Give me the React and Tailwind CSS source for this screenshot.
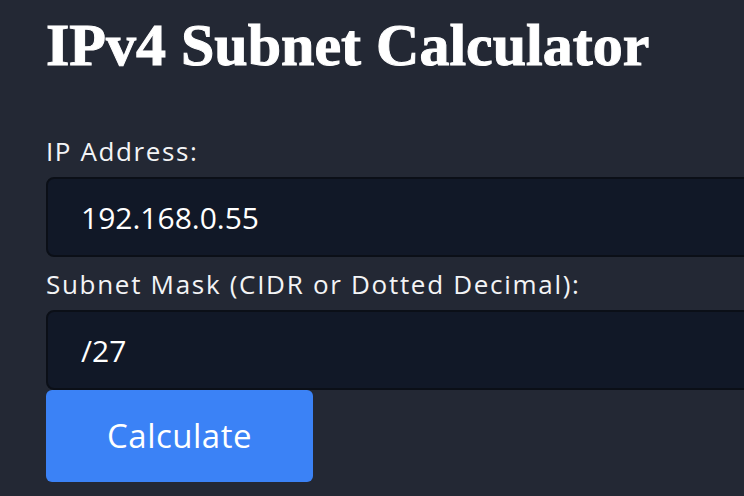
import React, { useState } from 'react';

const labelFont = { fontFamily: '"Open Sans", "Liberation Sans", sans-serif' };

export default function App() {
  const [ip, setIp] = useState('192.168.0.55');
  const [mask, setMask] = useState('/27');

  return (
    <div className="w-[744px] h-[496px] overflow-hidden bg-[#232834]">
      <div className="w-[820px] pl-[46px] pt-[15px]">
        <h1
          className="text-[60px] font-bold text-white leading-[60px] tracking-[0px] [-webkit-text-stroke:1px_white]"
          style={{ fontFamily: '"Liberation Serif", "DejaVu Serif", serif' }}
        >
          IPv4 Subnet Calculator
        </h1>

        <div className="mt-[59px] flex flex-col" style={labelFont}>
          <label className="text-[26px] text-gray-100 leading-[34px] mb-[9px] tracking-[1.6px]">IP Address:</label>
          <input
            value={ip}
            onChange={(e) => setIp(e.target.value)}
            className="h-[80px] w-full rounded-lg border-2 border-[#0b0f17] bg-[#111827] px-[33px] text-[30px] tracking-[0px] text-white outline-none"
          />

          <label className="text-[26px] text-gray-100 leading-[34px] mt-[10px] mb-[9px] tracking-[1.7px]">
            Subnet Mask (CIDR or Dotted Decimal):
          </label>
          <input
            value={mask}
            onChange={(e) => setMask(e.target.value)}
            className="h-[80px] w-full rounded-lg border-2 border-[#0b0f17] bg-[#111827] px-[33px] text-[30px] tracking-[0px] text-white outline-none"
          />

          <button className="w-[267px] h-[92px] rounded-md bg-[#3b82f6] text-[33px] tracking-[0.5px] text-white">
            Calculate
          </button>

          <div className="mt-[6px] text-[26px] text-gray-100 leading-[34px] tracking-[1.6px]">Network Address:</div>
        </div>
      </div>
    </div>
  );
}
